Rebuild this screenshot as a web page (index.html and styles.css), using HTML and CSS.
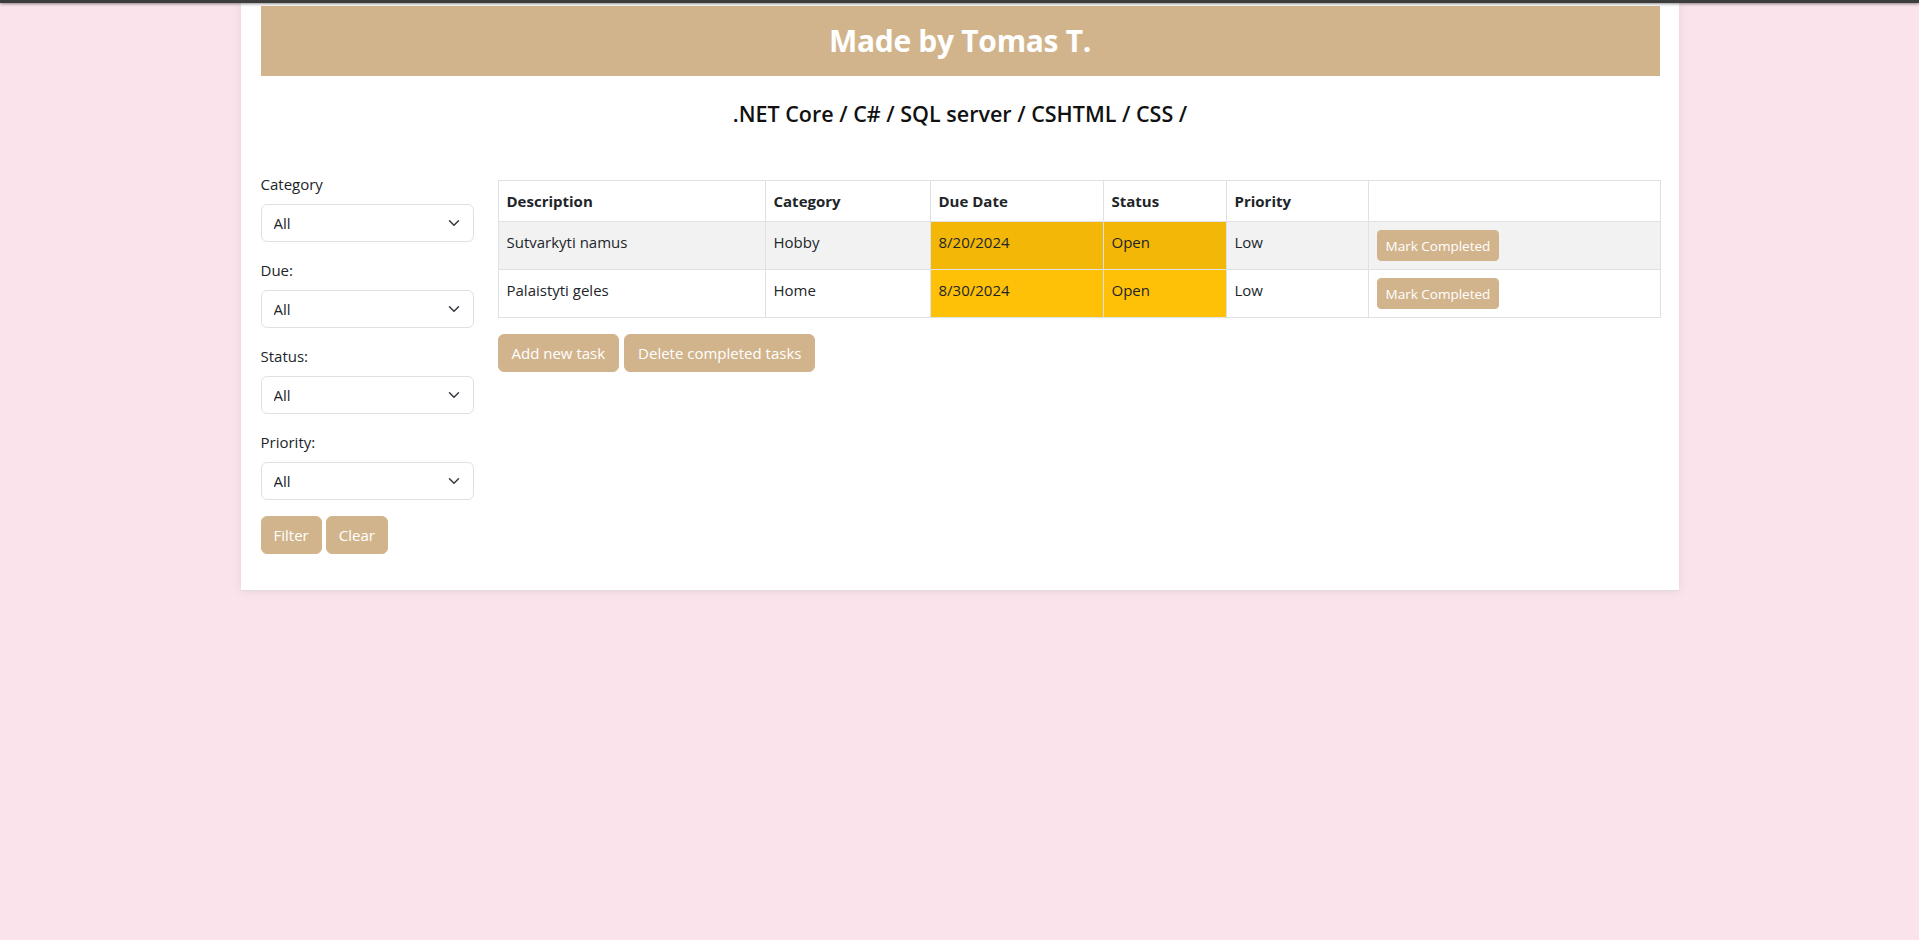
FILE: index.html
```html
<!DOCTYPE html>
<html lang="en">
<head>
<meta charset="utf-8">
<title>Todo</title>
<link rel="stylesheet" href="styles.css">
</head>
<body>
<div class="topbar"></div>
<div class="container">
  <header class="banner"><h1 class="banner-title">Made by Tomas T.</h1></header>
  <h5 class="subtitle">.NET Core / C# / SQL server / CSHTML / CSS /</h5>
  <div class="row">
    <aside class="sidebar">
      <form class="filters">
        <div class="field">
          <label class="field-label">Category</label>
          <div class="select-wrap">
            <select class="select"><option>All</option></select>
            <svg class="chevron" viewBox="0 0 16 16" width="16" height="12"><path d="m2 5 6 6 6-6" fill="none" stroke="#343a40" stroke-width="2" stroke-linecap="round" stroke-linejoin="round"/></svg>
          </div>
        </div>
        <div class="field">
          <label class="field-label">Due:</label>
          <div class="select-wrap">
            <select class="select"><option>All</option></select>
            <svg class="chevron" viewBox="0 0 16 16" width="16" height="12"><path d="m2 5 6 6 6-6" fill="none" stroke="#343a40" stroke-width="2" stroke-linecap="round" stroke-linejoin="round"/></svg>
          </div>
        </div>
        <div class="field">
          <label class="field-label">Status:</label>
          <div class="select-wrap">
            <select class="select"><option>All</option></select>
            <svg class="chevron" viewBox="0 0 16 16" width="16" height="12"><path d="m2 5 6 6 6-6" fill="none" stroke="#343a40" stroke-width="2" stroke-linecap="round" stroke-linejoin="round"/></svg>
          </div>
        </div>
        <div class="field">
          <label class="field-label">Priority:</label>
          <div class="select-wrap">
            <select class="select"><option>All</option></select>
            <svg class="chevron" viewBox="0 0 16 16" width="16" height="12"><path d="m2 5 6 6 6-6" fill="none" stroke="#343a40" stroke-width="2" stroke-linecap="round" stroke-linejoin="round"/></svg>
          </div>
        </div>
        <div class="btn-group">
          <button type="button" class="btn">Filter</button>
          <button type="button" class="btn">Clear</button>
        </div>
      </form>
    </aside>
    <main class="main">
      <table class="tasks">
        <colgroup>
          <col class="c1"><col class="c2"><col class="c3"><col class="c4"><col class="c5"><col class="c6">
        </colgroup>
        <thead>
          <tr><th>Description</th><th>Category</th><th>Due Date</th><th>Status</th><th>Priority</th><th></th></tr>
        </thead>
        <tbody>
          <tr class="striped">
            <td>Sutvarkyti namus</td><td>Hobby</td><td class="warn">8/20/2024</td><td class="warn">Open</td><td>Low</td>
            <td><button type="button" class="btn btn-sm">Mark Completed</button></td>
          </tr>
          <tr>
            <td>Palaistyti geles</td><td>Home</td><td class="warn">8/30/2024</td><td class="warn">Open</td><td>Low</td>
            <td><button type="button" class="btn btn-sm">Mark Completed</button></td>
          </tr>
        </tbody>
      </table>
      <div class="btn-group btn-group-wide">
        <button type="button" class="btn btn-md">Add new task</button>
        <button type="button" class="btn btn-md">Delete completed tasks</button>
      </div>
    </main>
  </div>
</div>
</body>
</html>
```
FILE: styles.css
```css
* { box-sizing: border-box; }
html, body { margin: 0; padding: 0; }
body {
  background: #fae3ea;
  font-family: "Open Sans", "Noto Sans", sans-serif;
  font-size: 15px;
  line-height: 24px;
  color: #212529;
  min-height: 940px;
}
.topbar {
  position: relative;
  z-index: 2;
  height: 3px;
  background: #3d3d3d;
  box-shadow: 0 1px 3px rgba(0,0,0,0.45);
}
.container {
  width: 1438px;
  margin: 0 auto;
  background: #fff;
  padding: 3px 19px 36px 20px;
  box-shadow: 0 0 10px rgba(0,0,0,0.08);
  border-bottom: 1px solid #e2dcdc;
}
.banner {
  height: 70px;
  background: #d2b48c;
  display: flex;
  align-items: center;
  justify-content: center;
}
.banner-title {
  margin: 0;
  color: #fff;
  font-size: 30px;
  font-weight: 700;
  line-height: 36px;
  letter-spacing: -0.3px;
}
.subtitle {
  margin: 25px 0 0;
  text-align: center;
  font-size: 21.5px;
  font-weight: 600;
  line-height: 26px;
  color: #111;
}
.row {
  display: flex;
  gap: 24px;
  margin-top: 45px;
}
.sidebar { width: 213px; flex: none; }
.main { flex: 1; padding-top: 8px; }
.field { margin-bottom: 16px; }
.field-label { display: block; margin-bottom: 8px; line-height: 24px; }
.select-wrap { position: relative; }
.select {
  display: block;
  width: 100%;
  height: 38px;
  appearance: none;
  -webkit-appearance: none;
  background: #fff;
  border: 1px solid #dee2e6;
  border-radius: 6px;
  padding: 6px 36px 6px 12px;
  font-family: inherit;
  font-size: 15px;
  color: #212529;
}
.chevron {
  position: absolute;
  right: 12px;
  top: 13px;
  pointer-events: none;
}
.btn-group { display: flex; gap: 4px; }
.btn-group-wide { gap: 5px; }
.btn {
  background: #d2b48c;
  color: #fff;
  border: 1px solid #d2b48c;
  border-radius: 6px;
  height: 38px;
  padding: 0 12px;
  font-family: inherit;
  font-size: 15px;
  line-height: 24px;
}
.btn-md { padding: 0 13px; }
.btn-sm {
  height: 31px;
  padding: 0 8px;
  font-size: 13.5px;
  border-radius: 4px;
}
.tasks {
  width: 100%;
  table-layout: fixed;
  border-collapse: collapse;
  margin-bottom: 16px;
}
.c1 { width: 267px; }
.c2 { width: 165px; }
.c3 { width: 173px; }
.c4 { width: 123px; }
.c5 { width: 142px; }
.c6 { width: 292px; }
.tasks th, .tasks td {
  border: 1px solid #dee2e6;
  padding: 8px;
  text-align: left;
  vertical-align: top;
  line-height: 24px;
}
.tasks th { font-weight: 700; }
.tasks td { font-weight: 400; }
.striped td { background: #f2f2f2; }
.tasks td.warn { background: #ffc107; }
.striped td.warn { background: #f2b707; }
```
